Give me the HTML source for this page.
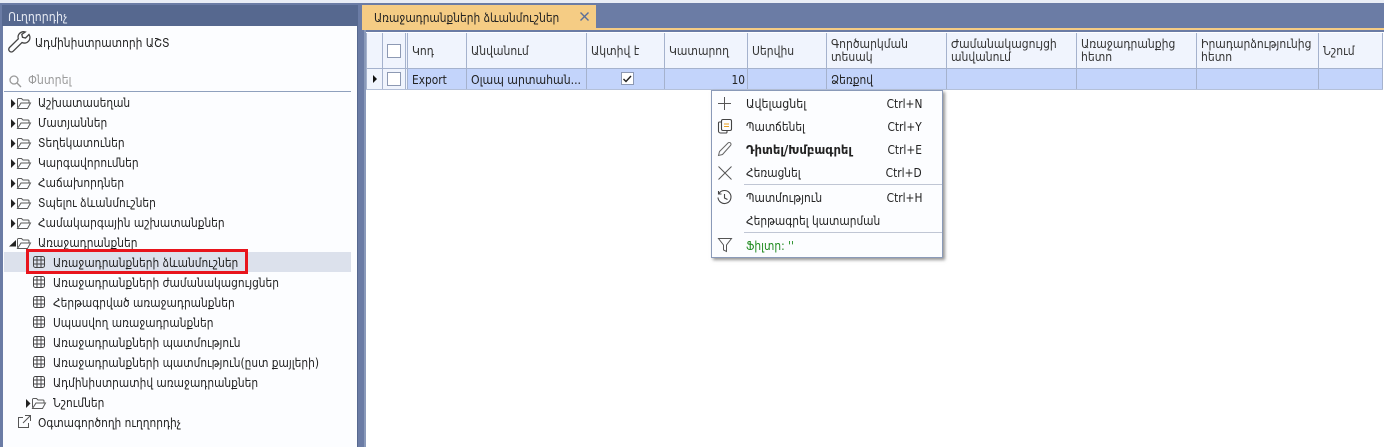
<!DOCTYPE html>
<html lang="hy"><head><meta charset="utf-8"><title>Ուղղորդիչ</title>
<style>
html,body{margin:0;padding:0;width:1384px;height:447px;overflow:hidden;background:#6b7ca5}
*{box-sizing:border-box}
body{position:relative;font:12px "DejaVu Sans","Liberation Sans",sans-serif;color:#222}
.a{position:absolute}
.t{position:absolute;white-space:nowrap;line-height:14px;height:14px;transform:scaleX(.885);transform-origin:0 50%}
.r{transform-origin:100% 50%}
svg{position:absolute;overflow:visible}
.c{position:absolute;top:33px;width:1px;height:56px;background:#a5b2cd}
.h{position:absolute;white-space:nowrap;line-height:13px;color:#333;font-size:12px;transform:scaleX(.9);transform-origin:0 50%}
</style></head><body>
<div class="a" style="left:0;top:0;width:1384px;height:3px;background:#e9edf5"></div>
<div class="a" style="left:0;top:3px;width:2px;height:444px;background:#6b7ca5"></div>
<div class="a" style="left:2px;top:5px;width:356px;height:21px;background:#56688f"></div>
<div class="a" style="left:3px;top:26px;width:354px;height:421px;background:#fcfdff"></div>
<div class="t" style="left:8px;top:10px;color:#e6eaf3;transform:scaleX(.917)">Ուղղորդիչ</div>
<svg style="left:8px;top:31px" width="22" height="22" viewBox="0 0 22 22" fill="none" stroke="#444" stroke-width="1.3"><path d="M21 3.500l-3.500 3.500-3-.7-.7-3L17.300 1a5.500 5.500 0 0 0-7 6.800L1.500 16.500a2.600 2.600 0 0 0 3.700 3.700l8.800-8.700A5.500 5.500 0 0 0 21 3.500z"/></svg>
<div class="t" style="left:35px;top:36px;transform:scaleX(.89)">Ադմինիստրատորի ԱՇՏ</div>
<svg style="left:9px;top:75px" width="13" height="13" fill="none" stroke="#999" stroke-width="1.300"><circle cx="5" cy="5" r="4"/><path d="M8 8l4 4"/></svg>
<div class="t" style="left:28px;top:73px;color:#9a9a9a;transform:scaleX(.917)">Փնտրել</div>
<div class="a" style="left:4px;top:91px;width:347px;height:1px;background:#8fa0bd"></div>

<svg width="0" height="0" style="position:absolute"><defs>
<g id="f" fill="none" stroke="#5a5a5a" stroke-width="1"><path d="M.5 9.500V1.500a1 1 0 0 1 1-1h3l1.500 1.500h5a1 1 0 0 1 1 1v1.500M.5 10.500h10l3-5.500H4z"/></g>
<g id="g" fill="none" stroke="#444" stroke-width="1"><rect x=".5" y=".5" width="11" height="11" rx="2"/><path d="M4 .5v11M8 .5v11M.5 4h11M.5 8h11"/></g>
</defs></svg>

<!-- Tree -->
<svg style="left:11px;top:99px" width="5" height="9"><path d="M0 0l4.500 4.500L0 9z" fill="#222"/></svg><svg style="left:17px;top:98px" width="15" height="11"><use href="#f"/></svg><div class="t" style="left:38px;top:96px">Աշխատասեղան</div>
<svg style="left:11px;top:119px" width="5" height="9"><path d="M0 0l4.500 4.500L0 9z" fill="#222"/></svg><svg style="left:17px;top:118px" width="15" height="11"><use href="#f"/></svg><div class="t" style="left:38px;top:116px">Մատյաններ</div>
<svg style="left:11px;top:139px" width="5" height="9"><path d="M0 0l4.500 4.500L0 9z" fill="#222"/></svg><svg style="left:17px;top:138px" width="15" height="11"><use href="#f"/></svg><div class="t" style="left:38px;top:136px">Տեղեկատուներ</div>
<svg style="left:11px;top:159px" width="5" height="9"><path d="M0 0l4.500 4.500L0 9z" fill="#222"/></svg><svg style="left:17px;top:158px" width="15" height="11"><use href="#f"/></svg><div class="t" style="left:38px;top:156px">Կարգավորումներ</div>
<svg style="left:11px;top:179px" width="5" height="9"><path d="M0 0l4.500 4.500L0 9z" fill="#222"/></svg><svg style="left:17px;top:178px" width="15" height="11"><use href="#f"/></svg><div class="t" style="left:38px;top:176px">Հաճախորդներ</div>
<svg style="left:11px;top:199px" width="5" height="9"><path d="M0 0l4.500 4.500L0 9z" fill="#222"/></svg><svg style="left:17px;top:198px" width="15" height="11"><use href="#f"/></svg><div class="t" style="left:38px;top:196px">Տպելու ձևանմուշներ</div>
<svg style="left:11px;top:219px" width="5" height="9"><path d="M0 0l4.500 4.500L0 9z" fill="#222"/></svg><svg style="left:17px;top:218px" width="15" height="11"><use href="#f"/></svg><div class="t" style="left:38px;top:216px">Համակարգային աշխատանքներ</div>
<svg style="left:9px;top:240px" width="7" height="7"><path d="M7 0v6.500H0z" fill="#222"/></svg><svg style="left:17px;top:238px" width="15" height="11"><use href="#f"/></svg><div class="t" style="left:38px;top:236px">Առաջադրանքներ</div>

<div class="a" style="left:4px;top:252px;width:347px;height:20px;background:#dce1ec"></div>
<div class="a" style="left:26px;top:249px;width:222px;height:25px;border:3px solid #e8141c"></div>
<svg style="left:33px;top:256px" width="12" height="12"><use href="#g"/></svg><div class="t" style="left:53px;top:256px">Առաջադրանքների ձևանմուշներ</div>
<svg style="left:33px;top:276px" width="12" height="12"><use href="#g"/></svg><div class="t" style="left:53px;top:276px">Առաջադրանքների ժամանակացույցներ</div>
<svg style="left:33px;top:296px" width="12" height="12"><use href="#g"/></svg><div class="t" style="left:53px;top:296px">Հերթագրված առաջադրանքներ</div>
<svg style="left:33px;top:316px" width="12" height="12"><use href="#g"/></svg><div class="t" style="left:53px;top:316px">Սպասվող առաջադրանքներ</div>
<svg style="left:33px;top:336px" width="12" height="12"><use href="#g"/></svg><div class="t" style="left:53px;top:336px">Առաջադրանքների պատմություն</div>
<svg style="left:33px;top:356px" width="12" height="12"><use href="#g"/></svg><div class="t" style="left:53px;top:356px">Առաջադրանքների պատմություն(ըստ քայլերի)</div>
<svg style="left:33px;top:376px" width="12" height="12"><use href="#g"/></svg><div class="t" style="left:53px;top:376px">Ադմինիստրատիվ առաջադրանքներ</div>
<svg style="left:26px;top:399px" width="5" height="9"><path d="M0 0l4.500 4.500L0 9z" fill="#222"/></svg><svg style="left:32px;top:398px" width="15" height="11"><use href="#f"/></svg><div class="t" style="left:53px;top:396px">Նշումներ</div>
<svg style="left:18px;top:415px" width="13" height="13" fill="none" stroke="#555" stroke-width="1"><path d="M5 2.500H.5v10h10V8M7 .5h5.500V6M12.500 .5L5 8"/></svg><div class="t" style="left:38px;top:416px">Օգտագործողի ուղղորդիչ</div>

<!-- Right area -->
<div class="a" style="left:357px;top:26px;width:1px;height:421px;background:#56688f"></div>
<div class="a" style="left:364px;top:30px;width:2px;height:417px;background:#8a9aba"></div>
<div class="a" style="left:362px;top:5px;width:234px;height:23px;background:#f5cc84"></div>
<div class="t" style="left:374px;top:11px">Առաջադրանքների ձևանմուշներ</div>
<svg style="left:580px;top:12px" width="10" height="10" stroke="#5b6f9a" stroke-width="1.400"><path d="M.5 .5l8 8M8.500 .5l-8 8"/></svg>
<div class="a" style="left:362px;top:28px;width:1022px;height:2px;background:#f5cc84"></div>
<div class="a" style="left:366px;top:32px;width:1018px;height:415px;background:#fff"></div>
<div class="a" style="left:366px;top:33px;width:1017px;height:35px;background:#f0f4fd"></div>
<div class="a" style="left:366px;top:68px;width:1017px;height:1px;background:#a5b2cd"></div>
<div class="a" style="left:366px;top:69px;width:1017px;height:20px;background:#c3d4fb"></div>
<div class="a" style="left:366px;top:89px;width:1017px;height:1px;background:#b4c0d8"></div>
<div class="a" style="left:366px;top:69px;width:17px;height:20px;background:#f0f4fd"></div>
<div class="a" style="left:383px;top:69px;width:25px;height:20px;background:#f0f4fd"></div>
<div class="c" style="left:366px"></div><div class="c" style="left:382px"></div><div class="c" style="left:405px"></div><div class="c" style="left:407px"></div><div class="c" style="left:466px"></div><div class="c" style="left:586px"></div><div class="c" style="left:664px"></div><div class="c" style="left:747px"></div><div class="c" style="left:826px"></div><div class="c" style="left:946px"></div><div class="c" style="left:1076px"></div><div class="c" style="left:1196px"></div><div class="c" style="left:1318px"></div><div class="c" style="left:1382px"></div>
<div class="a" style="left:387px;top:44px;width:14px;height:14px;background:#fff;border:1px solid #8d99b3"></div>
<div class="a" style="left:387px;top:72px;width:14px;height:14px;background:#fff;border:1px solid #8d99b3"></div>
<svg style="left:373px;top:75px" width="5" height="8"><path d="M0 0l4 4-4 4z" fill="#111"/></svg>
<div class="h" style="left:412px;top:45px">Կոդ</div>
<div class="h" style="left:471px;top:45px">Անվանում</div>
<div class="h" style="left:591px;top:45px">Ակտիվ է</div>
<div class="h" style="left:669px;top:45px">Կատարող</div>
<div class="h" style="left:752px;top:45px">Սերվիս</div>
<div class="h" style="left:831px;top:38px">Գործարկման<br>տեսակ</div>
<div class="h" style="left:951px;top:38px">Ժամանակացույցի<br>անվանում</div>
<div class="h" style="left:1081px;top:38px">Առաջադրանքից<br>հետո</div>
<div class="h" style="left:1201px;top:38px">Իրադարձությունից<br>հետո</div>
<div class="h" style="left:1323px;top:45px">Նշում</div>
<div class="t" style="left:412px;top:73px">Export</div>
<div class="t" style="left:471px;top:73px;transform:scaleX(.91)">Օլապ արտահան...</div>
<div class="a" style="left:621px;top:72px;width:13px;height:13px;background:#fff;border:1px solid #8d99b3"></div>
<svg style="left:623px;top:75px" width="9" height="8" fill="none" stroke="#222" stroke-width="1.400"><path d="M.5 4l2.500 2.500L8 1"/></svg>
<div class="t r" style="left:700px;width:45px;top:73px;text-align:right">10</div>
<div class="t" style="left:831px;top:73px">Ձեռքով</div>

<!-- Context menu -->
<div class="a" style="left:711px;top:90px;width:232px;height:168px;background:#fcfdff;border:1px solid #8a9ab8;box-shadow:2px 2px 3px rgba(60,60,60,.55)"></div>
<div class="a" style="left:744px;top:184px;width:198px;height:1px;background:#c0c6d4"></div>
<div class="a" style="left:744px;top:232px;width:198px;height:1px;background:#c0c6d4"></div>
<svg style="left:718px;top:97px" width="13" height="13" stroke="#555"><path d="M6.500 0v13M0 6.500h13" fill="none"/></svg>
<svg style="left:718px;top:119px" width="14" height="15" fill="none" stroke="#444" stroke-width="1.100"><path d="M3.500 3H1.500a1 1 0 0 0-1 1v8a2 2 0 0 0 2 2H8a1 1 0 0 0 1-1v-1"/><rect x="3.500" y=".5" width="10" height="11" rx="1.500"/><path d="M6 5h5M6 7.500h5" stroke="#e8a020"/></svg>
<svg style="left:718px;top:142px" width="14" height="14" fill="none" stroke="#666" stroke-width="1"><path d="M.5 13.500l1-4L10 1a1.400 1.400 0 0 1 2.500 2.500L4.500 12.500z"/></svg>
<svg style="left:718px;top:166px" width="14" height="14" stroke="#555"><path d="M.5 .5l13 13M13.500 .5l-13 13" fill="none"/></svg>
<svg style="left:717px;top:190px" width="15" height="15" fill="none" stroke="#444" stroke-width="1.100"><path d="M2 3.500A6.500 6.500 0 1 1 1 7.500M1.500 1v3h3M7.500 4v4l3 1.500"/></svg>
<svg style="left:718px;top:238px" width="14" height="15" fill="none" stroke="#555" stroke-width="1"><path d="M.5 .5h13L8.500 7v6.500l-3-1.500V7z"/></svg>
<div class="t" style="left:746px;top:97px;transform:scaleX(.92)">Ավելացնել</div><div class="t r" style="right:462px;top:97px">Ctrl+N</div>
<div class="t" style="left:746px;top:120px">Պատճենել</div><div class="t r" style="right:462px;top:120px">Ctrl+Y</div>
<div class="t" style="left:746px;top:143px;font-weight:bold;transform:scaleX(.97)">Դիտել/Խմբագրել</div><div class="t r" style="right:462px;top:143px">Ctrl+E</div>
<div class="t" style="left:746px;top:166px">Հեռացնել</div><div class="t r" style="right:462px;top:166px">Ctrl+D</div>
<div class="t" style="left:746px;top:191px">Պատմություն</div><div class="t r" style="right:462px;top:191px">Ctrl+H</div>
<div class="t" style="left:746px;top:214px">Հերթագրել կատարման</div>
<div class="t" style="left:746px;top:239px;color:#1e8a1e">Ֆիլտր: ''</div>
</body></html>
